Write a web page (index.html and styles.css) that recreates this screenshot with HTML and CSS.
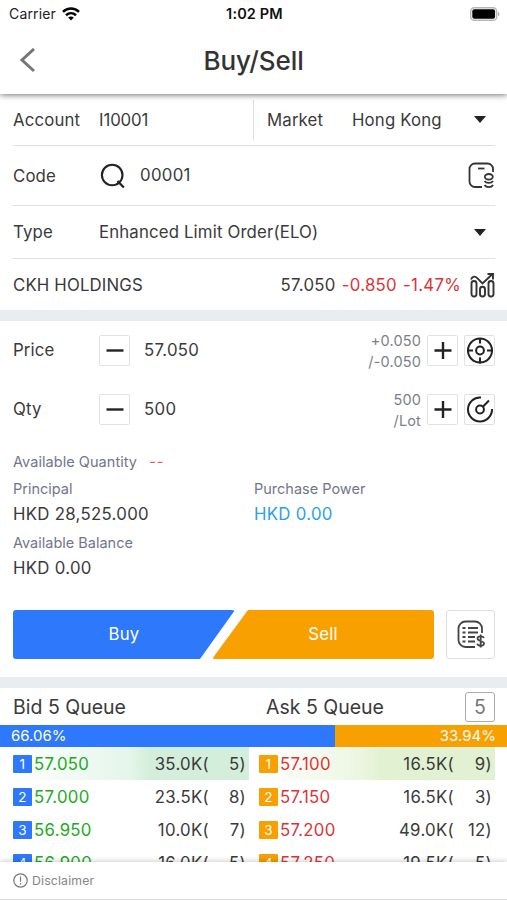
FILE: index.html
```html
<!DOCTYPE html>
<html lang="en">
  <head>
    <meta charset="utf-8" />
    <title>Buy/Sell</title>
    <meta name="viewport" content="width=device-width, initial-scale=1.0" />
    <link rel="stylesheet" href="styles.css">
  </head>

  <body>
    <div class="status-bar">
      <div class="carrier">
        <span>Carrier</span>
        <svg width="18" height="14" viewBox="0 0 18 14" fill="none" stroke="#000" stroke-width="2.5">
          <path d="M1 4.9C5.6.5 12.4.5 17 4.9" />
          <path d="M4 8.2c3-2.7 7-2.7 10 0" />
          <path d="M6.2 10.5c1.7-1.5 3.9-1.5 5.6 0L9 13.4z" fill="#000" stroke="none" />
        </svg>
      </div>
      <div class="time">1:02 PM</div>
      <svg class="battery" width="30" height="14" viewBox="0 0 30 14">
        <rect x=".7" y=".7" width="26" height="12.6" rx="3.6" fill="#fff" stroke="#b5b5b5" stroke-width="1.4" />
        <rect x="2.3" y="2.3" width="22.8" height="9.4" rx="2" fill="#000" />
        <path d="M28 4.7c2 1 2 3.6 0 4.6z" fill="#aaa" />
      </svg>
    </div>

    <header class="header">
      <svg class="back" width="18" height="26" viewBox="0 0 18 26" fill="none" stroke="#777" stroke-width="3">
        <path d="M15 1 3 12l12 11" />
      </svg>
      <h1>Buy/Sell</h1>
    </header>

    <!-- Order form -->
    <section class="form">
      <div class="row account-row">
        <div class="account">
          <span class="label">Account</span>
          <span class="account-no">I10001</span>
        </div>
        <div class="market">
          <span class="market-label">Market</span>
          <span>Hong Kong</span>
          <i class="caret"></i>
        </div>
      </div>

      <div class="row code-row">
        <span class="label">Code</span>
        <svg class="search" width="26" height="26" viewBox="0 0 26 26" fill="none" stroke="#222" stroke-width="2.1">
          <circle cx="12.2" cy="12" r="10.3" />
          <path d="m17.5 18 6.3 6.5" stroke-width="2.3" />
        </svg>
        <span class="digits">00001</span>
        <svg class="end" width="27" height="27" viewBox="0 0 27 27" fill="none" stroke="#333" stroke-width="1.8">
          <path d="M14 25H7a5.5 5.5 0 0 1-5.5-5.5V7A5.5 5.5 0 0 1 7 1.5h12.5A5.5 5.5 0 0 1 25 7v3" />
          <path d="M10 6.5h6.5" />
          <ellipse cx="20.8" cy="14.8" rx="4" ry="2.8" />
          <path d="M16.500 19c1.800 2.500 6.800 2.500 8.600 0M16.500 23c1.800 2.900 6.800 2.900 8.600 0" />
        </svg>
      </div>

      <div class="row type-row">
        <span class="label">Type</span>
        <span class="type-value">Enhanced Limit Order(ELO)</span>
        <i class="caret"></i>
      </div>

      <div class="row quote-row">
        <span class="stock-name">CKH HOLDINGS</span>
        <span class="digits last">57.050</span>
        <span class="digits down">-0.850</span>
        <span class="digits down percent">-1.47%</span>
        <svg width="25" height="26" viewBox="0 0 25 26" fill="none" stroke="#333" stroke-width="1.9">
          <rect x="1.5" y="9" width="5" height="15.5" rx="2.5" />
          <rect x="10" y="14.8" width="5" height="9.7" rx="2.5" />
          <rect x="18.5" y="9" width="5" height="15.5" rx="2.5" />
          <path d="M1 7.5C2.5 4 5.5 4 7 6l5.5 5.5L22.500 2M17.500 2h5.500v5.500" />
        </svg>
      </div>
    </section>

    <section class="ticket">
      <div class="stepper">
        <span class="label">Price</span>
        <button class="square" aria-label="Decrease price">
          <svg width="18" height="18" viewBox="0 0 18 18" stroke="#222" stroke-width="2.4"><path d="M.5 8.5h17" /></svg>
        </button>
        <span class="digits value">57.050</span>
        <span class="step">+0.050<br>/-0.050</span>
        <button class="square" aria-label="Increase price">
          <svg width="18" height="18" viewBox="0 0 18 18" stroke="#222" stroke-width="2.4"><path d="M.5 8.5h17M9 0v17" /></svg>
        </button>
        <button class="square" aria-label="Market price">
          <svg width="28" height="28" viewBox="0 0 28 28" fill="none" stroke="#222" stroke-width="2">
            <circle cx="14" cy="13.5" r="12" />
            <circle cx="14" cy="13.5" r="3.9" />
            <path d="M14 1v5.500M14 20.500v6M1 13.500h6M21 13.500h6" />
          </svg>
        </button>
      </div>

      <div class="stepper">
        <span class="label">Qty</span>
        <button class="square" aria-label="Decrease quantity">
          <svg width="18" height="18" viewBox="0 0 18 18" stroke="#222" stroke-width="2.4"><path d="M.5 8.5h17" /></svg>
        </button>
        <span class="digits value">500</span>
        <span class="step">500<br>/Lot</span>
        <button class="square" aria-label="Increase quantity">
          <svg width="18" height="18" viewBox="0 0 18 18" stroke="#222" stroke-width="2.4"><path d="M.5 8.5h17M9 0v17" /></svg>
        </button>
        <button class="square" aria-label="Maximum quantity">
          <svg width="28" height="28" viewBox="0 0 28 28" fill="none" stroke="#222" stroke-width="2">
            <path d="M15 1.500A12 12 0 1 0 26 13" />
            <circle cx="14" cy="13.500" r="3.900" />
            <path d="m16.800 10.700 6.200-6.200" />
          </svg>
        </button>
      </div>

      <div class="available">Available Quantity <span class="none">--</span></div>
      <div class="funds">
        <div class="fund">
          <div class="fund-label">Principal</div>
          <div class="fund-value">HKD 28,525.000</div>
        </div>
        <div class="fund">
          <div class="fund-label">Purchase Power</div>
          <div class="fund-value power">HKD 0.00</div>
        </div>
        <div class="fund">
          <div class="fund-label">Available Balance</div>
          <div class="fund-value">HKD 0.00</div>
        </div>
      </div>

      <div class="actions">
        <button class="buy">Buy</button>
        <button class="sell">Sell</button>
        <button class="orders" aria-label="Order list">
          <svg width="28" height="29" viewBox="0 0 28 29" fill="none" stroke="#444" stroke-width="1.8">
            <path d="M18 27H8.500A7 7 0 0 1 1.500 20V8.500a7 7 0 0 1 7-7h9.500a7 7 0 0 1 7 7V13" />
            <path d="M5.500 8h3M11 8h10M5.500 12.500h3M11 12.500h10M5.500 17h3M11 17h7M5.500 21.500h3M11 21.500h7" />
            <path d="M27 18c-1-2.200-6.500-2.500-6.500.5S27 20.500 27 23.500s-6 2.700-6.800.2M23.700 14.500v13" />
          </svg>
        </button>
      </div>
    </section>

    <!-- Bid / ask queue -->
    <section class="queue">
      <div class="queue-head">
        <span>Bid 5 Queue</span>
        <span>Ask 5 Queue</span>
        <button class="depth">5</button>
      </div>
      <div class="ratio">
        <div class="ratio-bid" style="width: 66.06%">66.06%</div>
        <div class="ratio-ask">33.94%</div>
      </div>
      <div class="book">
        <div class="side bid">
          <div class="level best"><b>1</b><span class="price">57.050</span><span class="volume">35.0K(</span><span class="count">5)</span></div>
          <div class="level"><b>2</b><span class="price">57.000</span><span class="volume">23.5K(</span><span class="count">8)</span></div>
          <div class="level"><b>3</b><span class="price">56.950</span><span class="volume">10.0K(</span><span class="count">7)</span></div>
          <div class="level"><b>4</b><span class="price">56.900</span><span class="volume">16.0K(</span><span class="count">5)</span></div>
        </div>
        <div class="side ask">
          <div class="level best"><b>1</b><span class="price">57.100</span><span class="volume">16.5K(</span><span class="count">9)</span></div>
          <div class="level"><b>2</b><span class="price">57.150</span><span class="volume">16.5K(</span><span class="count">3)</span></div>
          <div class="level"><b>3</b><span class="price">57.200</span><span class="volume">49.0K(</span><span class="count">12)</span></div>
          <div class="level"><b>4</b><span class="price">57.250</span><span class="volume">19.5K(</span><span class="count">5)</span></div>
        </div>
      </div>
    </section>

    <footer class="footer">
      <svg width="15" height="15" viewBox="0 0 15 15" fill="none" stroke="#777" stroke-width="1.2">
        <circle cx="7.5" cy="7.5" r="6.7" />
        <path d="M7.5 3.5v5.2M7.500 10v1.500" />
      </svg>
      <span>Disclaimer</span>
    </footer>
  </body>
</html>
```
FILE: styles.css
```css
* {
  box-sizing: border-box;
}

body {
  display: flex;
  flex-direction: column;
  height: 900px;
  margin: 0;
  overflow: hidden;
  background-color: #fff;
  color: #3a3a3a;
  font-family: Inter, sans-serif;
  font-size: 16.8px;
  letter-spacing: 0.15px;
}

button {
  padding: 0;
  border: none;
  background: none;
  font: inherit;
  letter-spacing: inherit;
}

svg {
  display: block;
  flex: none;
}

/* Status bar and title */
.status-bar {
  display: grid;
  grid-template-columns: 1fr auto 1fr;
  align-items: center;
  flex: none;
  z-index: 2;
  height: 27px;
  padding: 0 7px 0 9px;
  background-color: #fff;
  color: #222;
  font-size: 14px;
}

.carrier {
  display: flex;
  align-items: center;
  gap: 6px;
}

.time {
  color: #111;
  font-size: 14.5px;
  font-weight: 600;
}

.battery {
  justify-self: end;
}

.header {
  display: grid;
  grid-template-columns: 40px 1fr 40px;
  align-items: center;
  flex: none;
  z-index: 1;
  height: 67px;
  padding: 0 19px;
  background-color: #fff;
  box-shadow: 0 1px 6px rgba(0, 0, 0, 0.55);
}

.header h1 {
  margin: 0;
  padding-bottom: 1px;
  color: #333;
  font-size: 26px;
  font-weight: 500;
  letter-spacing: -0.1px;
  text-align: center;
}

/* Order form rows */
.form {
  flex: none;
  padding: 0 12px 0 13px;
  border-bottom: 11px solid #e9edf0;
}

.row {
  display: flex;
  align-items: center;
  border-bottom: 1px solid #e0e0e0;
}

.label {
  flex: none;
  width: 86px;
}

.digits {
  letter-spacing: 0.3px;
}

.account-row {
  height: 52px;
}

.account {
  display: flex;
  align-items: center;
  width: 241px;
  height: 40px;
  border-right: 1px solid #e0e0e0;
}

.account-no {
  letter-spacing: -0.1px;
}

.market {
  display: flex;
  align-items: center;
  flex: 1;
  padding-left: 13px;
}

.market-label {
  width: 85px;
}

.caret {
  margin: 0 9px 0 auto;
  border: 6px solid transparent;
  border-top: 7px solid #222;
  border-bottom: none;
}

.code-row {
  height: 60px;
}

.code-row .digits {
  padding-bottom: 1px;
}

.search {
  margin: 0 14px 0 1px;
}

.end {
  margin-left: auto;
}

.type-row {
  height: 53px;
}

.quote-row {
  height: 51px;
  border-bottom: none;
}

.last {
  margin: 0 6px 0 auto;
}

.down {
  color: #dc3338;
}

.percent {
  margin: 0 9px 0 6px;
}

/* Price and quantity */
.ticket {
  flex: none;
  height: 367px;
  padding: 0 12px 0 13px;
  border-bottom: 11px solid #e9edf0;
}

.stepper {
  display: flex;
  align-items: center;
  height: 59px;
}

.stepper .label {
  padding-bottom: 1px;
}

.square {
  display: flex;
  align-items: center;
  justify-content: center;
  width: 31px;
  height: 31px;
  border: 1px solid #e2e2e2;
  border-radius: 2px;
}

.square + .square {
  margin-left: 6px;
}

.value {
  margin-left: 14px;
  padding-bottom: 2px;
}

.step {
  margin: 0 6px 0 auto;
  color: #7c7f8b;
  font-size: 14.5px;
  line-height: 21px;
  text-align: right;
}

.available {
  margin-top: 9px;
  color: #72768a;
  font-size: 14.5px;
  letter-spacing: 0.05px;
  line-height: 27px;
}

.none {
  margin-left: 8px;
  color: #ef5544;
  letter-spacing: 1px;
}

.funds {
  display: grid;
  grid-template-columns: 241px 1fr;
}

.fund {
  height: 54px;
}

.fund-label {
  color: #72768a;
  font-size: 14.5px;
  letter-spacing: 0;
  line-height: 27px;
}

.fund-value {
  letter-spacing: 0.3px;
  line-height: 25px;
}

.power {
  color: #2ba0ee;
}

/* Buy and sell buttons */
.actions {
  display: flex;
  margin-top: 27px;
}

.buy,
.sell {
  width: 222px;
  height: 49px;
  padding-bottom: 2px;
  color: #fff;
}

.buy {
  border-radius: 3px;
  background-color: #2e79fb;
  clip-path: polygon(0 0, 100% 0, 187px 100%, 0 100%);
}

.sell {
  margin-left: -23px;
  border-radius: 3px;
  background-color: #f7a000;
  clip-path: polygon(36px 0, 100% 0, 100% 100%, 0 100%);
}

.orders {
  display: flex;
  align-items: center;
  justify-content: center;
  width: 49px;
  height: 49px;
  margin-left: auto;
  border: 1px solid #ddd;
  border-radius: 3px;
}

/* Queue */
.queue {
  flex: 1;
  min-height: 0;
  overflow: hidden;
}

.queue-head {
  display: grid;
  grid-template-columns: 253px 1fr auto;
  align-items: center;
  height: 37px;
  padding: 1px 12px 0 13px;
  font-size: 19.5px;
  letter-spacing: 0;
}

.depth {
  width: 30px;
  height: 30px;
  border: 1px solid #aaa;
  border-radius: 3px;
  color: #777;
}

.ratio {
  display: flex;
  height: 22px;
  color: #fff;
  font-size: 15px;
  letter-spacing: 0;
  line-height: 22px;
}

.ratio-bid {
  padding-left: 11px;
  background-color: #2e79fb;
}

.ratio-ask {
  flex: 1;
  padding-right: 11px;
  background-color: #f7a000;
  text-align: right;
}

.book {
  display: grid;
  grid-template-columns: 236px 236px;
  gap: 10px;
  padding-left: 13px;
  letter-spacing: 0.3px;
}

.level {
  display: grid;
  grid-template-columns: 19px 66px 1fr 37px;
  align-items: center;
  height: 33px;
  padding-right: 3px;
}

.ask .level {
  grid-template-columns: 19px 66px 1fr 38px;
}

.level b {
  height: 18px;
  border-radius: 1px;
  color: #fff;
  font-size: 13.5px;
  font-weight: 400;
  line-height: 18px;
  text-align: center;
}

.price {
  padding-left: 2px;
}

.volume,
.count {
  text-align: right;
}

.bid b {
  background-color: #2e79fb;
}

.bid .price {
  color: #22aa22;
}

.bid .best {
  background: linear-gradient(90deg, #fff, #e4f5ea 50%, #d3eeda 58%);
}

.ask b {
  background-color: #f7a000;
}

.ask .price {
  color: #dc3338;
}

.ask .best {
  background: linear-gradient(90deg, #fff, #edf6e2 42%, #e2f1d2 52%);
}

.footer {
  display: flex;
  align-items: center;
  gap: 4px;
  flex: none;
  z-index: 1;
  height: 38px;
  padding-left: 13px;
  border-bottom: 1px solid #ddd;
  background-color: #fff;
  box-shadow: 0 -1px 5px rgba(0, 0, 0, 0.2);
  color: #85858c;
  font-size: 12.3px;
}
```
